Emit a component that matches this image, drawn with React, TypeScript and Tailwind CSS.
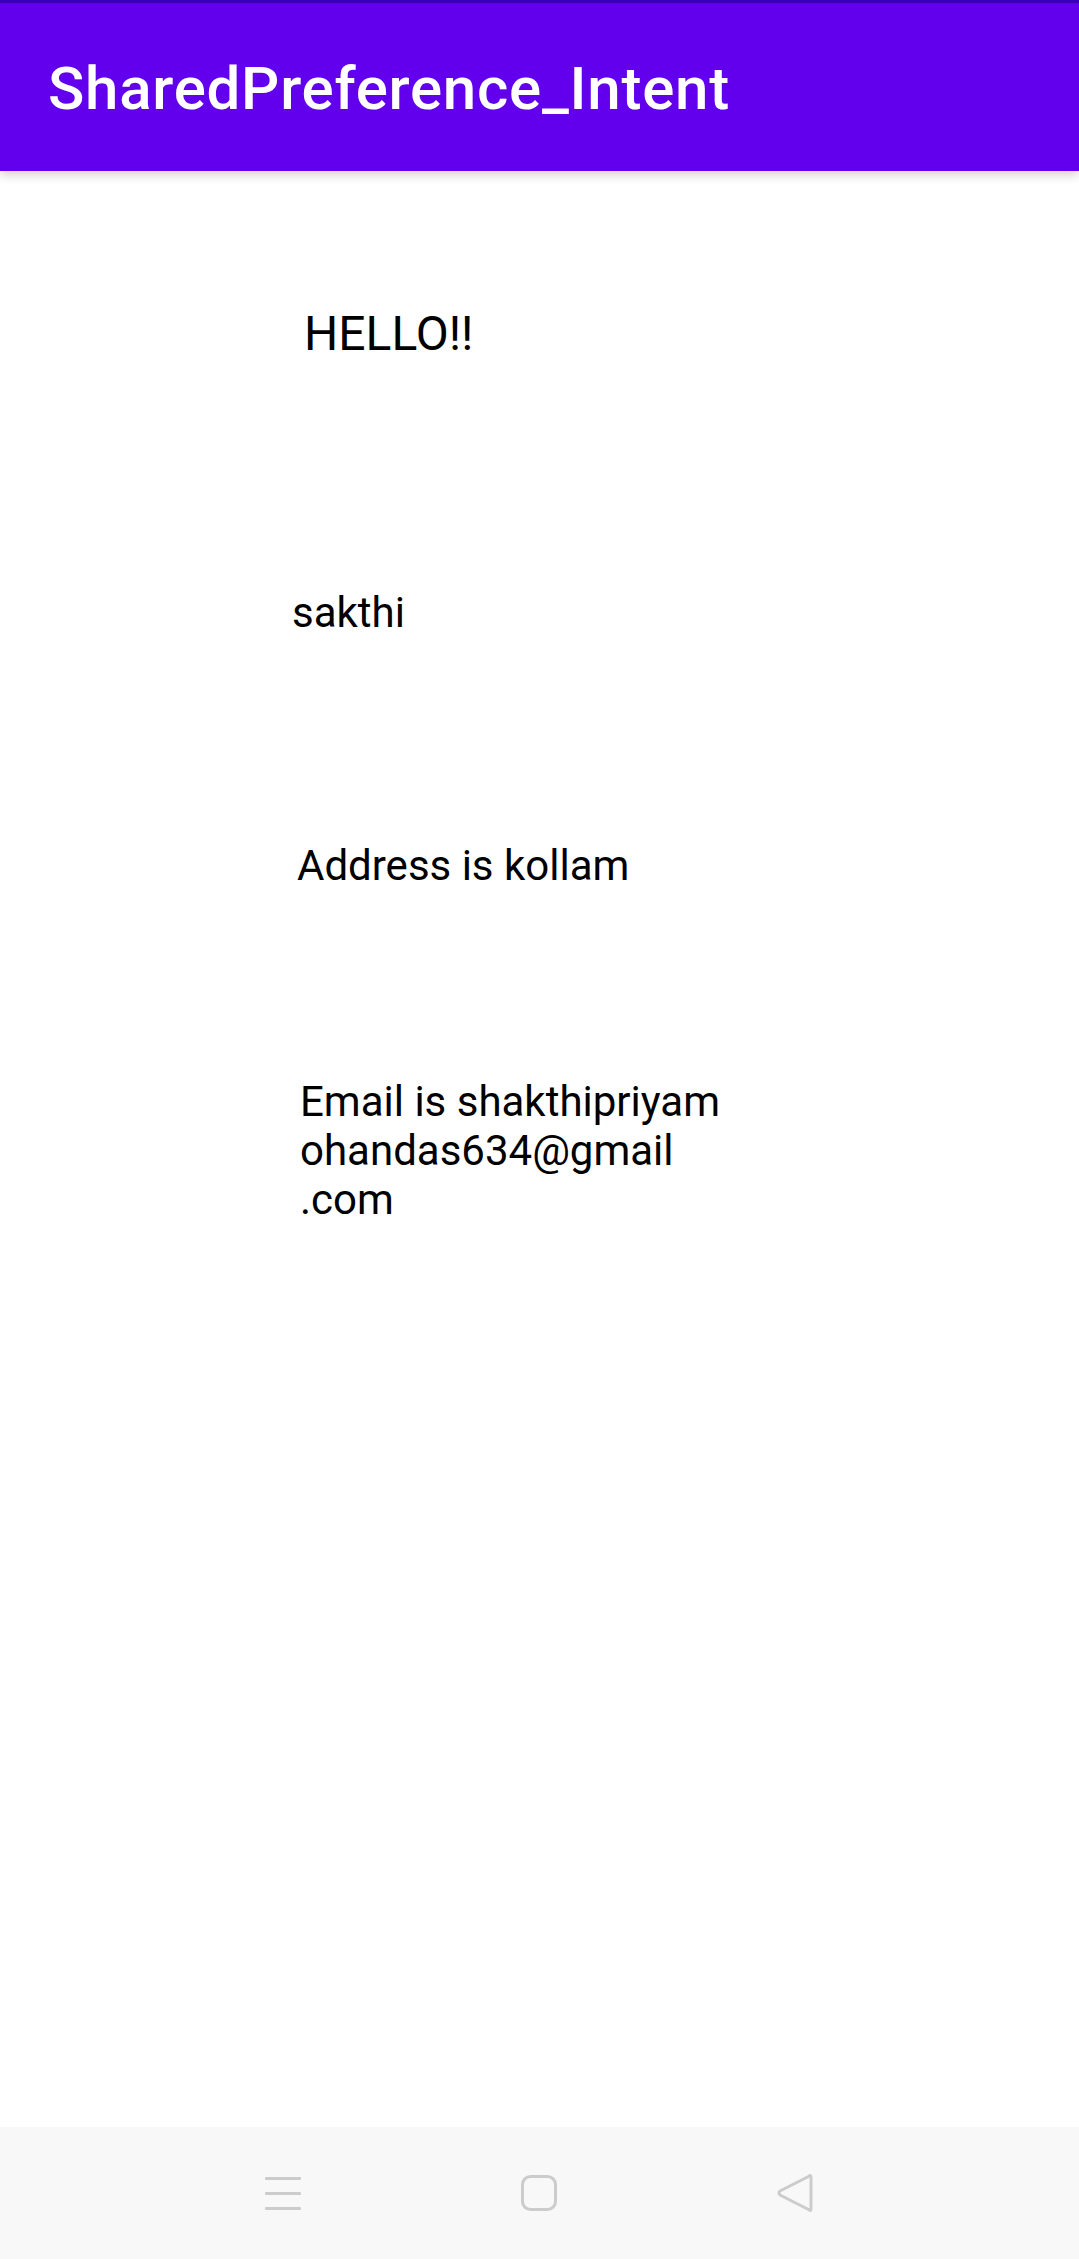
const NavBar = () => {
   return (
      <div className="h-[132px] w-full bg-[#f8f8f8] flex items-center justify-center gap-[220px]">
         <svg width="36" height="36" viewBox="0 0 36 36">
            <rect x="0" y="2" width="36" height="3" rx="1" fill="#cccccc" />
            <rect x="0" y="17" width="36" height="3" rx="1" fill="#cccccc" />
            <rect x="0" y="32" width="36" height="3" rx="1" fill="#cccccc" />
         </svg>
         <svg width="36" height="36" viewBox="0 0 36 36">
            <rect x="1.5" y="1.5" width="33" height="33" rx="8" fill="none" stroke="#cccccc" strokeWidth="3" />
         </svg>
         <svg width="37" height="40" viewBox="0 0 37 40">
            <path
               d="M34 4.5 Q34 1 31.5 3.5 L3 18 Q1 20 3 22 L31.5 36.5 Q34 39 34 35.5 Z"
               fill="none"
               stroke="#cccccc"
               strokeWidth="3"
               strokeLinejoin="round"
            />
         </svg>
      </div>
   );
};

const App = () => {
   return (
      <div
         className="w-[1079px] min-h-[2259px] flex flex-col bg-white"
         style={{ fontFamily: 'Roboto, "Liberation Sans", sans-serif' }}
      >
         <div className="relative z-10 shadow-[0_4px_10px_rgba(0,0,0,0.18)]">
            <div className="h-[3px] bg-[#3700b3]" />
            <div className="h-[168px] bg-[#6200ee] flex items-center pl-[48px] pt-[4px]">
               <span className="text-[60px] leading-[70px] font-medium tracking-[0.75px] text-white">
                  SharedPreference_Intent
               </span>
            </div>
         </div>

         <div className="flex flex-col text-black">
            <div className="mt-[135px] pl-[304px] text-[48px] leading-[56px]">HELLO!!</div>
            <div className="mt-[226px] pl-[292px] text-[42px] leading-[49px]">sakthi</div>
            <div className="mt-[204px] pl-[297px] text-[42px] leading-[49px]">Address is kollam</div>
            <div className="mt-[187px] pl-[300px] text-[42px] leading-[49px]">
               <div>Email is shakthipriyam</div>
               <div>ohandas634@gmail</div>
               <div>.com</div>
            </div>
         </div>

         <div className="mt-auto">
            <NavBar />
         </div>
      </div>
   );
};

export default App;
